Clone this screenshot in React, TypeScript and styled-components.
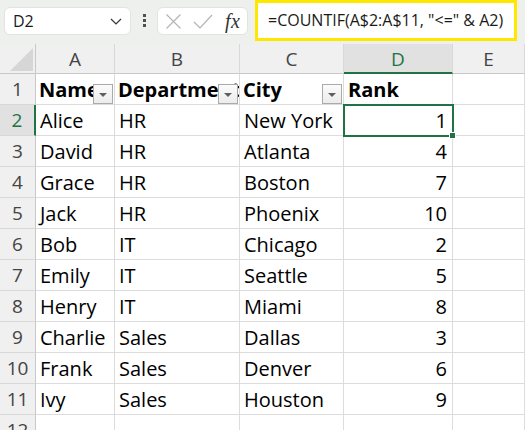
import React from "react";
import styled, { createGlobalStyle } from "styled-components";

const GlobalStyle = createGlobalStyle`
  html, body { margin: 0; padding: 0; background: #ffffff; overflow: hidden; }
  body { font-family: "Open Sans", "Noto Sans", sans-serif; }
  * { box-sizing: border-box; }
`;

const Page = styled.div`
  width: 525px;
  height: 430px;
  overflow: hidden;
  background: #ffffff;
`;

const TopBar = styled.div`
  display: flex;
  align-items: flex-start;
  height: 44px;
  padding-left: 4px;
  background: #eef0ee;
`;

const NameBox = styled.div`
  margin-top: 7px;
  width: 127px;
  height: 28px;
  background: #ffffff;
  border: 1px solid #e2e4e2;
  border-radius: 6px;
  display: flex;
  align-items: center;
  justify-content: space-between;
  padding: 0 7px 0 8px;
  font-size: 16px;
  color: #1a1a1a;
`;

const Dots = styled.div`
  width: 26px;
  height: 41px;
  display: flex;
  flex-direction: column;
  align-items: center;
  justify-content: center;
  gap: 2px;
`;

const Dot = styled.span`
  width: 3px;
  height: 3px;
  background: #505050;
`;

const FxBox = styled.div`
  margin-top: 7px;
  width: 91px;
  height: 28px;
  background: #ffffff;
  border: 1px solid #e2e4e2;
  border-radius: 6px;
  display: flex;
  align-items: center;
  padding-left: 7px;
  gap: 11px;
`;

const FxText = styled.span`
  font-family: "Liberation Serif", "DejaVu Serif", serif;
  font-style: italic;
  font-size: 20px;
  color: #333333;
  margin-left: 1px;
  letter-spacing: 0.5px;
`;

const FormulaBox = styled.div`
  margin-left: 7px;
  width: 262px;
  height: 41px;
  border: 3px solid #ffe700;
  background: #ffffff;
  display: flex;
  align-items: center;
  padding-left: 10px;
  padding-bottom: 2px;
  font-size: 16px;
  color: #1a1a1a;
  white-space: nowrap;
  overflow: hidden;
`;

const Sheet = styled.div`
  display: grid;
  grid-template-columns: 36px 79px 125px 104px 109px 72px;
  grid-template-rows: 30px;
  grid-auto-rows: 31px;
`;

const Corner = styled.div`
  background: #f0f0f0;
  border-right: 1px solid #c8c8c8;
  border-bottom: 1px solid #c8c8c8;
  display: flex;
  align-items: flex-end;
  justify-content: flex-end;
  padding: 0 2px 2px 0;
`;

const ColHeader = styled.div<{ $active?: boolean }>`
  background: ${(p) => (p.$active ? "#e1e1e1" : "#f0f0f0")};
  border-right: 1px solid #d8d8d8;
  border-bottom: ${(p) => (p.$active ? "2px solid #217346" : "1px solid #c8c8c8")};
  display: flex;
  align-items: center;
  justify-content: center;
  padding-top: 1px;
  font-size: 19px;
  color: ${(p) => (p.$active ? "#217346" : "#444444")};
`;

const RowHeader = styled.div<{ $active?: boolean }>`
  background: ${(p) => (p.$active ? "#e1e1e1" : "#f0f0f0")};
  border-right: ${(p) => (p.$active ? "2px solid #217346" : "1px solid #c8c8c8")};
  border-bottom: 1px solid #d8d8d8;
  display: flex;
  align-items: flex-end;
  justify-content: center;
  padding-bottom: 2px;
  font-size: 19px;
  color: ${(p) => (p.$active ? "#217346" : "#444444")};
`;

const Cell = styled.div<{ $right?: boolean; $bold?: boolean }>`
  position: relative;
  border-right: 1px solid #dcdcdc;
  border-bottom: 1px solid #dcdcdc;
  display: flex;
  align-items: flex-end;
  justify-content: ${(p) => (p.$right ? "flex-end" : "flex-start")};
  padding: 0 ${(p) => (p.$right ? "5px" : "0")} 1px ${(p) => (p.$right ? "0" : "4px")};
  font-size: 20px;
  font-weight: ${(p) => (p.$bold ? 700 : 400)};
  line-height: 27px;
  color: #000000;
  white-space: nowrap;
  overflow: hidden;
`;

const HeaderCell = styled(Cell)`
  padding-left: 3px;
`;

const FilterButton = styled.div`
  position: absolute;
  right: 1px;
  bottom: 0;
  width: 20px;
  height: 20px;
  border: 1px solid #aaaaaa;
  background: linear-gradient(#fbfbfb, #ececec);
  display: flex;
  align-items: center;
  justify-content: center;
  padding-top: 2px;
`;

const Caret = styled.span`
  width: 0;
  height: 0;
  border-left: 4px solid transparent;
  border-right: 4px solid transparent;
  border-top: 4px solid #606060;
`;

const SelectedCell = styled(Cell)`
  overflow: visible;
  z-index: 2;
`;

const SelectionFrame = styled.div`
  position: absolute;
  left: -1px;
  top: -1px;
  right: -2px;
  bottom: -2px;
  border: 2px solid #217346;
  pointer-events: none;
`;

const FillHandle = styled.div`
  position: absolute;
  right: -4px;
  bottom: -4px;
  width: 7px;
  height: 7px;
  background: #217346;
  border: 1px solid #ffffff;
`;

const CellText = styled.span`
  overflow: hidden;
`;

const Chevron = () => (
  <svg width="14" height="14" viewBox="0 0 14 14">
    <path d="M2 5 L7 10 L12 5" fill="none" stroke="#333" strokeWidth="1.2" />
  </svg>
);

const CrossIcon = () => (
  <svg width="17" height="17" viewBox="0 0 17 17">
    <path d="M1.5 1.5 L15.5 15.5 M15.5 1.5 L1.5 15.5" fill="none" stroke="#b4b4b4" strokeWidth="1.2" />
  </svg>
);

const CheckIcon = () => (
  <svg width="20" height="17" viewBox="0 0 20 17">
    <path d="M1 9 L7 15 L19 2" fill="none" stroke="#b4b4b4" strokeWidth="1.2" />
  </svg>
);

const CornerTriangle = () => (
  <svg width="23" height="23" viewBox="0 0 23 23">
    <polygon points="0,23 23,0 23,23" fill="#d6d6d6" />
  </svg>
);

type Row = { name: string; dept: string; city: string; rank: number };

const rows: Row[] = [
  { name: "Alice", dept: "HR", city: "New York", rank: 1 },
  { name: "David", dept: "HR", city: "Atlanta", rank: 4 },
  { name: "Grace", dept: "HR", city: "Boston", rank: 7 },
  { name: "Jack", dept: "HR", city: "Phoenix", rank: 10 },
  { name: "Bob", dept: "IT", city: "Chicago", rank: 2 },
  { name: "Emily", dept: "IT", city: "Seattle", rank: 5 },
  { name: "Henry", dept: "IT", city: "Miami", rank: 8 },
  { name: "Charlie", dept: "Sales", city: "Dallas", rank: 3 },
  { name: "Frank", dept: "Sales", city: "Denver", rank: 6 },
  { name: "Ivy", dept: "Sales", city: "Houston", rank: 9 },
];

const columns = ["A", "B", "C", "D", "E"];

export default function App() {
  return (
    <Page>
      <GlobalStyle />
      <TopBar>
        <NameBox>
          <span>D2</span>
          <Chevron />
        </NameBox>
        <Dots>
          <Dot />
          <Dot />
          <Dot />
        </Dots>
        <FxBox>
          <CrossIcon />
          <CheckIcon />
          <FxText>fx</FxText>
        </FxBox>
        <FormulaBox>=COUNTIF(A$2:A$11, "&lt;=" &amp; A2)</FormulaBox>
      </TopBar>
      <Sheet>
        <Corner>
          <CornerTriangle />
        </Corner>
        {columns.map((c) => (
          <ColHeader key={c} $active={c === "D"}>
            {c}
          </ColHeader>
        ))}

        <RowHeader>1</RowHeader>
        <HeaderCell $bold>
          <CellText>Name</CellText>
          <FilterButton>
            <Caret />
          </FilterButton>
        </HeaderCell>
        <HeaderCell $bold>
          <CellText>Department</CellText>
          <FilterButton>
            <Caret />
          </FilterButton>
        </HeaderCell>
        <HeaderCell $bold>
          <CellText>City</CellText>
          <FilterButton>
            <Caret />
          </FilterButton>
        </HeaderCell>
        <Cell $bold>Rank</Cell>
        <Cell />

        {rows.map((r, i) => {
          const n = i + 2;
          return (
            <React.Fragment key={n}>
              <RowHeader $active={n === 2}>{n}</RowHeader>
              <Cell>{r.name}</Cell>
              <Cell>{r.dept}</Cell>
              <Cell>{r.city}</Cell>
              {n === 2 ? (
                <SelectedCell $right>
                  {r.rank}
                  <SelectionFrame>
                    <FillHandle />
                  </SelectionFrame>
                </SelectedCell>
              ) : (
                <Cell $right>{r.rank}</Cell>
              )}
              <Cell />
            </React.Fragment>
          );
        })}

        <RowHeader>12</RowHeader>
        <Cell />
        <Cell />
        <Cell />
        <Cell />
        <Cell />
      </Sheet>
    </Page>
  );
}
